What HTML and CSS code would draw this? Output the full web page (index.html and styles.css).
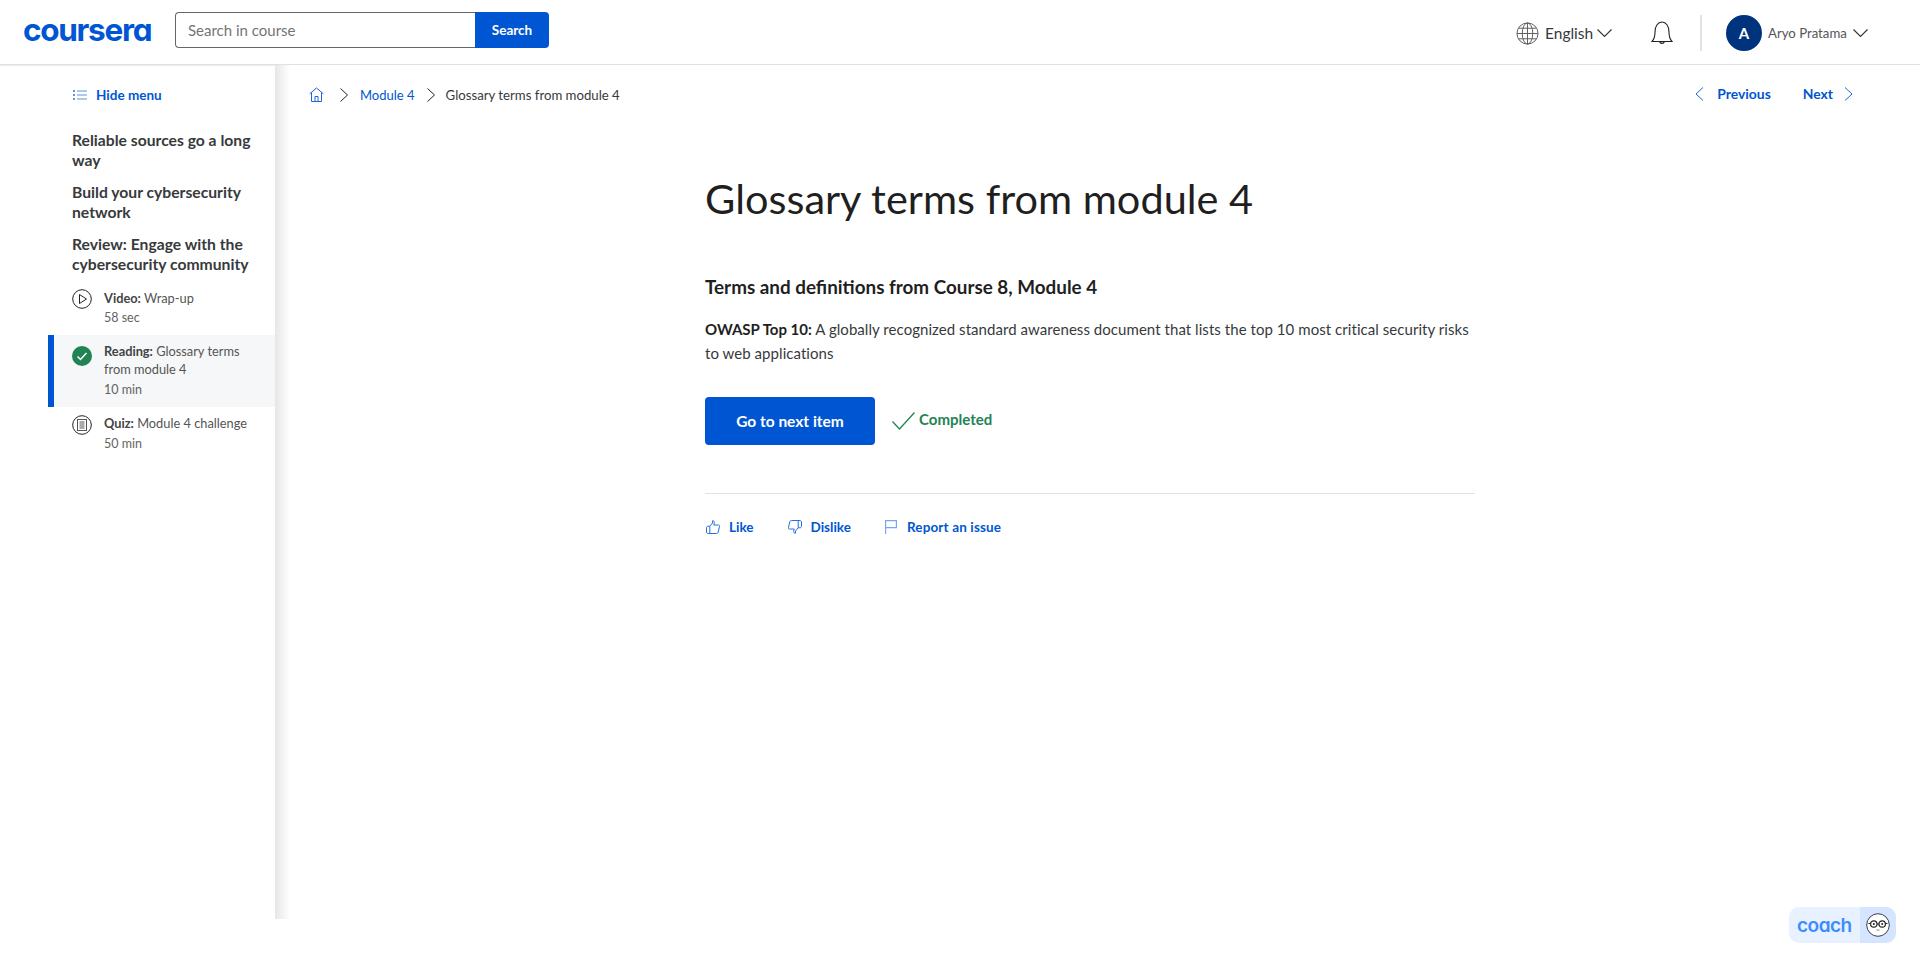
FILE: index.html
```html
<!DOCTYPE html>
<html lang="en">
<head>
<meta charset="utf-8">
<title>Glossary terms from module 4 | Coursera</title>
<link rel="stylesheet" href="styles.css">
</head>
<body>
<header class="topbar">
  <div class="logo">coursera</div>
  <form class="search">
    <div class="search-input">Search in course</div>
    <div class="search-btn">Search</div>
  </form>
  <div class="top-right">
    <svg class="globe" viewBox="0 0 24 24" fill="none" stroke="#5b5b5b" stroke-width="1"><circle cx="12" cy="12" r="11"/><ellipse cx="12" cy="12" rx="5.500" ry="11"/><path d="M12 1v22M1 12h22M2.600 6.500h18.800M2.600 17.500h18.800"/></svg>
    <span class="lang">English</span>
    <svg class="chev-down" viewBox="0 0 15 8" fill="none" stroke="#333" stroke-width="1.100"><path d="M.5.500l7 7 7-7"/></svg>
    <svg class="bell" viewBox="0 0 22 25" fill="none" stroke="#222" stroke-width="1.100"><path d="M1 20.500c2.500-2.500 3-5 3-9.500C4 5 7 1 11 1s7 4 7 10c0 4.500.5 7 3 9.500z"/><path d="M8.500 20.500a2.600 2.600 0 0 0 5 0"/></svg>
    <span class="vr"></span>
    <span class="avatar">A</span>
    <span class="user">Aryo Pratama</span>
    <svg class="chev-down user-chev" viewBox="0 0 15 8" fill="none" stroke="#333" stroke-width="1.100"><path d="M.5.500l7 7 7-7"/></svg>
  </div>
</header>

<div class="page">
  <aside class="sidebar">
    <a class="hide-menu">
      <svg class="list-ic" viewBox="0 0 14 10" fill="#5f93e4"><path d="M0 0h2v2H0zM0 4h2v2H0zM0 8h2v2H0zM4 .5h10v1H4zM4 4.500h10v1H4zM4 8.500h10v1H4z"/></svg>
      Hide menu
    </a>
    <h3 class="lesson first">Reliable sources go a long way</h3>
    <h3 class="lesson">Build your cybersecurity network</h3>
    <h3 class="lesson">Review: Engage with the cybersecurity community</h3>

    <div class="item video">
      <svg class="item-ic" viewBox="0 0 20 20" fill="none" stroke="#222" stroke-width="1"><circle cx="10" cy="10" r="9.300"/><path d="M7.500 5.500v9l7-4.500z"/></svg>
      <div>
        <div class="item-title"><b>Video:</b> Wrap-up</div>
        <div class="item-time">58 sec</div>
      </div>
    </div>
    <div class="item active">
      <svg class="item-ic" viewBox="0 0 20 20"><circle cx="10" cy="10" r="10" fill="#1f8354"/><path d="M5.500 10.500l3 3 6-6.500" fill="none" stroke="#fff" stroke-width="1.500"/></svg>
      <div>
        <div class="item-title two"><b>Reading:</b> Glossary terms from module 4</div>
        <div class="item-time">10 min</div>
      </div>
    </div>
    <div class="item quiz">
      <svg class="item-ic" viewBox="0 0 20 20" fill="none" stroke="#222" stroke-width="1"><circle cx="10" cy="10" r="9.300"/><rect x="5.500" y="4.500" width="9" height="11" stroke="#555"/><path d="M7.500 7h5M7.500 9h5M7.500 11h5M7.500 13h5" stroke="#555" stroke-width="1.200"/></svg>
      <div>
        <div class="item-title"><b>Quiz:</b> Module 4 challenge</div>
        <div class="item-time">50 min</div>
      </div>
    </div>
  </aside>
  <div class="edge"></div>

  <main class="main">
    <nav class="crumbs">
      <svg class="home" viewBox="0 0 15 15" fill="none" stroke="#1f66d8" stroke-width="1"><path d="M.7 6.800L7.500 1l6.800 5.800M2.500 5.500v9h10v-9M6 14.500v-5h3v5"/></svg>
      <svg class="chev-r" viewBox="0 0 8 14" fill="none" stroke="#222" stroke-width="1"><path d="M.5.500l7 6.500-7 6.500"/></svg>
      <a class="crumb-link">Module 4</a>
      <svg class="chev-r" viewBox="0 0 8 14" fill="none" stroke="#222" stroke-width="1"><path d="M.5.500l7 6.500-7 6.500"/></svg>
      <span class="crumb-cur">Glossary terms from module 4</span>
      <div class="pager">
        <svg class="chev-l" viewBox="0 0 9 14" fill="none" stroke="#1f66d8" stroke-width="1"><path d="M8 .5L1 7l7 6.500"/></svg>
        <a class="prev">Previous</a>
        <a class="next">Next</a>
        <svg class="chev-l" viewBox="0 0 9 14" fill="none" stroke="#1f66d8" stroke-width="1"><path d="M1 .5L8 7l-7 6.500"/></svg>
      </div>
    </nav>

    <article class="content">
      <h1>Glossary terms from module 4</h1>
      <h2>Terms and definitions from Course 8, Module 4</h2>
      <p><b>OWASP Top 10:</b> A globally recognized standard awareness document that lists the top 10 most critical security risks to web applications</p>
      <div class="cta">
        <a class="next-btn">Go to next item</a>
        <svg class="done-ic" viewBox="0 0 23 18" fill="none" stroke="#1f8354" stroke-width="1.300"><path d="M.5 9.500l7 7.500L22.500.5"/></svg>
        <span class="done">Completed</span>
      </div>
      <hr class="rule">
      <div class="actions">
        <svg class="act-ic" viewBox="0 0 14 14" fill="none" stroke="#2a6fdb" stroke-width="1"><path d="M3.800 6.200L6.500 3V.8c1.500-.3 2 1 1.800 2L7.800 5h4.700c1 0 1.300.8 1 1.600l-1.300 5.600c-.2.800-.8 1.300-1.600 1.300H2c-.8 0-1.500-.7-1.500-1.500V7.500c0-.8.700-1.300 1.500-1.300h1.800v7.300"/></svg>
        <a class="act like">Like</a>
        <svg class="act-ic" viewBox="0 0 14 14" fill="none" stroke="#2a6fdb" stroke-width="1"><path d="M10.200 7.800L7.500 11v2.200c-1.500.3-2-1-1.800-2L6.200 9H1.500C.5 9 .2 8.200.5 7.400L1.800 1.800C2 1 2.600.5 3.400.5H12c.8 0 1.500.7 1.500 1.500v4.500c0 .8-.7 1.300-1.500 1.300h-1.800V.5"/></svg>
        <a class="act dislike">Dislike</a>
        <svg class="flag" viewBox="0 0 12 14" fill="none" stroke="#7aa5e8" stroke-width="1.200"><path d="M.6 14V.6h10.800v7H.6"/></svg>
        <a class="act report">Report an issue</a>
      </div>
    </article>
  </main>
</div>

<div class="coach">
  <span class="coach-word">coach</span>
  <span class="coach-face">
    <svg viewBox="0 0 24 24" width="24" height="24"><circle cx="12" cy="12" r="11.300" fill="#fff" stroke="#3d3d50" stroke-width="1"/><g fill="none" stroke="#222" stroke-width="1.200"><circle cx="7.800" cy="11" r="3.200"/><circle cx="16.200" cy="11" r="3.200"/><path d="M11 11h2M2.500 10.500h2M19.500 10.500h2"/></g><circle cx="7.800" cy="11" r="1" fill="#222"/><circle cx="16.200" cy="11" r="1" fill="#222"/><path d="M10.500 17h3" stroke="#888" stroke-width="1"/></svg>
  </span>
</div>
</body>
</html>
```

FILE: styles.css
```css
* { box-sizing: border-box; }
html, body { margin: 0; padding: 0; }
body {
  width: 1920px;
  height: 967px;
  overflow: hidden;
  background: #fff;
  font-family: "Lato", "Noto Sans", sans-serif;
  color: #373a3c;
  position: relative;
}
a { color: #0056d2; }
b { font-weight: 700; }

/* top bar */
.topbar {
  height: 65px;
  border-bottom: 1px solid #e1e1e1;
  display: flex;
  align-items: center;
  padding-left: 23px;
}
.logo {
  width: 152px;
  margin-bottom: 4px;
  font-family: "Inter", sans-serif;
  font-feature-settings: "cv11";
  font-weight: 700;
  font-size: 31.500px;
  letter-spacing: -1.300px;
  color: #0056d2;
  line-height: 36px;
}
.search { display: flex; height: 36px; margin-bottom: 4px; }
.search-input {
  width: 300px;
  border: 1px solid #666;
  border-right: 0;
  border-radius: 4px 0 0 4px;
  padding-left: 12px;
  font-size: 15px;
  line-height: 35px;
  color: #757575;
}
.search-btn {
  width: 74px;
  background: #0056d2;
  border-radius: 0 4px 4px 0;
  color: #fff;
  font-size: 13.500px;
  font-weight: 700;
  line-height: 36px;
  text-align: center;
}
.top-right {
  margin-left: auto;
  margin-top: 2px;
  display: flex;
  align-items: center;
  padding-right: 52px;
}
.globe { width: 23px; height: 23px; margin-right: 6px; }
.lang { font-size: 15.500px; color: #373a3c; width: 52px; }
.chev-down { width: 15px; height: 8px; }
.bell { width: 22px; height: 25px; margin-left: 39px; }
.vr { width: 2px; height: 36px; background: #e1e1e1; margin-left: 27px; }
.avatar {
  width: 36px;
  height: 36px;
  border-radius: 50%;
  background: #00337d;
  color: #fff;
  font-weight: 700;
  font-size: 15px;
  text-align: center;
  line-height: 36px;
  margin-left: 24px;
}
.user { font-size: 13.200px; color: #555; margin-left: 6px; width: 85px; }

/* page */
.page { display: flex; height: 854px; }
.sidebar { width: 275px; padding-left: 48px; padding-top: 20px; box-shadow: inset 0 1px #ececec; }
.edge { width: 15px; background: linear-gradient(to right, #e6e6e6, #fff); }
.hide-menu {
  display: flex;
  align-items: center;
  height: 20px;
  margin-left: 25px;
  font-size: 13.500px;
  font-weight: 700;
  color: #0056d2;
}
.list-ic { width: 14px; height: 10px; margin-right: 9px; }
.lesson {
  margin: 12px 0 0 24px;
  width: 195px;
  font-size: 15.700px;
  font-weight: 700;
  line-height: 20px;
  color: #373a3c;
}
.lesson.first { margin-top: 25px; }
.item { display: flex; padding-left: 24px; }
.item.video { margin-top: 14px; }
.item.active {
  margin-top: 7px;
  height: 72px;
  padding: 7px 0 0 18px;
  border-left: 6px solid #0056d2;
  background: #f5f7f8;
}
.item.quiz { margin-top: 6px; }
.item-ic { width: 20px; height: 20px; flex: none; margin-right: 12px; margin-top: 1px; }
.active .item-ic { margin-top: 4px; }
.quiz .item-ic { margin-top: 2px; }
.item-title { font-size: 12.800px; line-height: 20px; color: #555; width: 150px; }
.item-title b { color: #444; }
.item-title.two { line-height: 18px; }
.item-time { font-size: 12.500px; line-height: 20px; color: #636363; }
.active .item-time { margin-top: 2px; }
.quiz .item-time { margin-top: 1px; }

/* main */
.main { flex: 1; }
.crumbs {
  display: flex;
  align-items: center;
  height: 59px;
  padding-left: 19px;
  font-size: 13px;
}
.home { width: 15px; height: 15px; margin-right: 16px; }
.chev-r { width: 8px; height: 14px; }
.crumb-link { color: #0056d2; margin: 0 12px; }
.crumb-cur { margin-left: 11px; color: #373a3c; font-size: 13.200px; }
.pager {
  margin-left: auto;
  display: flex;
  align-items: center;
  padding-right: 67px;
  margin-top: -2px;
  font-weight: 700;
  font-size: 13.900px;
}
.chev-l { width: 9px; height: 14px; }
.prev { margin: 0 32px 0 13px; }
.next { margin-right: 11px; }
.content { margin-left: 415px; width: 770px; }
h1 {
  margin: 46px 0 0;
  font-size: 41.500px;
  line-height: 56px;
  font-weight: 400;
  color: #1f1f1f;
}
h2 {
  margin: 47px 0 0;
  font-size: 18.850px;
  line-height: 28px;
  font-weight: 700;
  color: #1f1f1f;
}
p {
  margin: 16px 0 0;
  font-size: 15px;
  letter-spacing: .055px;
  line-height: 24px;
  color: #373a3c;
}
p b { color: #1f1f1f; letter-spacing: 0; }
.cta { display: flex; align-items: center; margin-top: 32px; height: 48px; }
.next-btn {
  width: 170px;
  height: 48px;
  background: #0056d2;
  border-radius: 4px;
  color: #fff;
  font-weight: 700;
  font-size: 15.500px;
  line-height: 48px;
  text-align: center;
}
.done-ic { width: 23px; height: 18px; margin: 0 4px 0 17px; }
.done { color: #1f8354; font-weight: 700; font-size: 15px; margin-top: -4px; }
.rule { margin: 48px 0 0; border: 0; border-top: 1px solid #e1e1e1; }
.actions {
  display: flex;
  align-items: center;
  margin-top: 23px;
  height: 20px;
  font-size: 13.500px;
  font-weight: 700;
}
.act-ic { width: 14px; height: 14px; margin-left: 1px; margin-right: 9px; }
.flag { width: 12px; height: 14px; margin-right: 10px; margin-left: 1px; }
.like { margin-right: 33px; }
.dislike { margin-right: 33px; }
.report { letter-spacing: .15px; }

/* coach */
.coach {
  position: absolute;
  left: 1789px;
  top: 907px;
  width: 107px;
  height: 36px;
  display: flex;
  align-items: center;
  background: #e8f1ff;
  border-radius: 10px;
  overflow: hidden;
}
.coach-word {
  margin-left: 8px;
  width: 63px;
  font-family: "Inter", sans-serif;
  font-feature-settings: "cv11";
  font-weight: 600;
  font-size: 19px;
  letter-spacing: -.5px;
  color: #3b8cff;
}
.coach-face {
  width: 36px;
  height: 36px;
  background: #d5e5ff;
  display: flex;
  align-items: center;
  justify-content: center;
}
```
